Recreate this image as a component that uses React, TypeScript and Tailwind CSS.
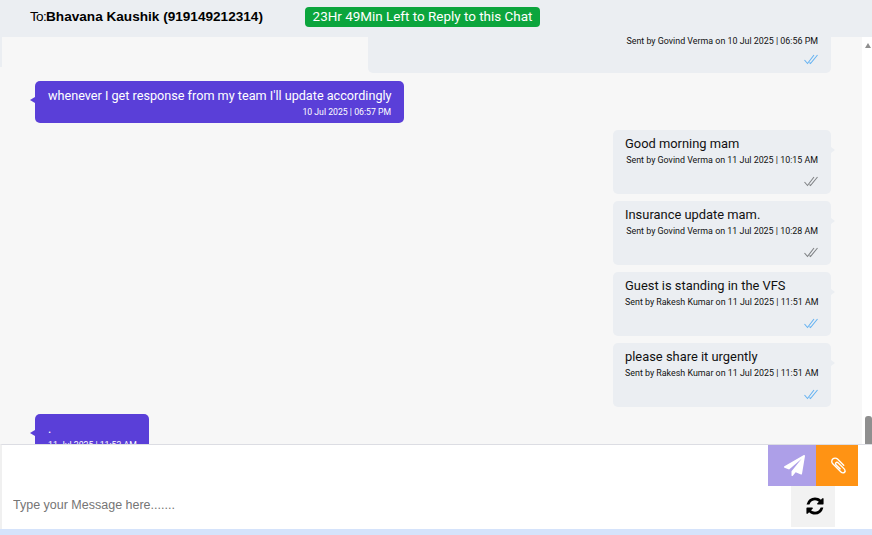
const FA_PLANE =
  "M1764 11q33 24 27 64l-256 1536q-5 29-32 45-14 8-31 8-11 0-24-5l-453-185-242 295q-18 23-49 23-13 0-22-4-19-7-30.5-23.5t-11.5-36.5v-349l864-1059-1069 925-395-162q-37-14-40-55-2-40 32-59l1664-960q15-9 32-9 20 0 36 11z";
const FA_CLIP =
  "M1596 1385q0 117-79 196t-196 79q-135 0-235-100l-777-776q-113-115-113-271 0-159 110-270t269-111q158 0 273 113l605 606q10 10 10 22 0 16-30.5 46.5t-46.5 30.5q-13 0-23-10l-606-607q-79-77-181-77-106 0-179 75t-73 181q0 105 76 181l776 777q63 63 134 63 60 0 100-40t40-100q0-71-63-134l-581-581q-26-24-60-24-29 0-48 19t-19 48q0 32 25 59l410 410q10 10 10 22 0 16-31 47t-47 31q-12 0-22-10l-410-410q-63-61-63-149 0-82 57-139t139-57q88 0 149 63l581 581q100 98 100 235z";
const FA_REFRESH =
  "M1639 1056q0 5-1 7-64 268-268 434.5t-478 166.5q-146 0-282.5-55t-243.5-157l-129 129q-19 19-45 19t-45-19-19-45v-448q0-26 19-45t45-19h448q26 0 45 19t19 45-19 45l-137 137q71 66 161 102t187 36q134 0 250-65t186-179q11-17 53-117 8-23 30-23h192q13 0 22.5 9.5t9.5 22.5zm25-800v448q0 26-19 45t-45 19h-448q-26 0-45-19t-19-45 19-45l138-138q-148-137-349-137-134 0-250 65t-186 179q-11 17-53 117-8 23-30 23h-199q-13 0-22.5-9.5t-9.5-22.5v-7q65-268 270-434.5t480-166.5q146 0 284 55.5t245 156.5l130-129q19-19 45-19t45 19 19 45z";

function Fa({ d, size, fill }: { d: string; size: number; fill: string }) {
  return (
    <svg width={size} height={size} viewBox="0 0 1792 1792" fill={fill}>
      <path d={d} />
    </svg>
  );
}

function Ticks({ blue }: { blue: boolean }) {
  const c = blue ? "#66b3f2" : "#808386";
  return (
    <svg width="14" height="11" viewBox="0 0 14 11" fill="none" stroke={c} strokeWidth="1.1">
      <path d="M0.5 6 L3.5 9.5 L10 1" />
      <path d="M5.5 8.5 L6.5 9.5 L13.5 1" />
    </svg>
  );
}

function Sent({ text, by, when, blue }: { text: string; by: string; when: string; blue: boolean }) {
  return (
    <div className="relative ml-auto w-[218px] h-[64px] rounded-[5px] bg-[#ebeef2] pl-[12px] pr-[13px] pt-[5px]">
      <div className="text-[12.9px] leading-[18px] text-[#111]">{text}</div>
      <div className="text-[8.9px] leading-[14px] text-[#111] whitespace-nowrap text-right">
        Sent by {by} on {when}
      </div>
      <div className="flex justify-end mt-[9px]">
        <Ticks blue={blue} />
      </div>
      <span className="absolute right-[-4px] top-[17px] border-y-[3px] border-l-[4px] border-y-transparent border-l-[#ebeef2]" />
    </div>
  );
}

function Received({ text, when, cls }: { text: string; when: string; cls: string }) {
  return (
    <div className={`relative rounded-[5px] bg-[#5a3fd8] pl-[13px] pr-[13px] pt-[6px] text-white ${cls}`}>
      <div className="text-[12.65px] leading-[18px] whitespace-nowrap">{text}</div>
      <div className="text-[8.7px] leading-[14px] text-right whitespace-nowrap">{when}</div>
      <span className="absolute left-[-5px] top-[16px] border-y-[3px] border-r-[5px] border-y-transparent border-r-[#5a3fd8]" />
    </div>
  );
}

export default function App() {
  return (
    <div className="h-[535px] w-[872px] flex flex-col overflow-hidden bg-white font-['Roboto',sans-serif]">
      <header className="h-[37px] shrink-0 bg-[#ebeef2] flex items-start pl-[30px] pt-[7px]">
        <div className="w-[275px] text-[13.6px] leading-[20px] text-black font-['Liberation_Sans',sans-serif]">
          <span className="tracking-[-0.7px]">To:</span>
          <b>Bhavana Kaushik (919149212314)</b>
        </div>
        <div className="h-[20px] w-[235px] rounded-[4px] bg-[#0ca53d] text-white text-[13.45px] leading-[20px] text-center whitespace-nowrap">
          23Hr 49Min Left to Reply to this Chat
        </div>
      </header>

      <main className="relative h-[407px] shrink-0 overflow-hidden bg-white">
        <div className="h-[407px] w-[862px] overflow-hidden bg-[#f7f7f7] flex flex-col pl-[2px]">
          <div className="h-[36px] shrink-0 flex justify-end pr-[31px]">
            <div className="w-[463px] h-[36px] rounded-b-[5px] bg-[#ebeef2] pr-[13px] pt-[1px] flex flex-col items-end">
              <div className="text-[8.9px] leading-[6px] text-[#111] whitespace-nowrap">
                Sent by Govind Verma on 10 Jul 2025 | 06:56 PM
              </div>
              <div className="mt-[10px]">
                <Ticks blue />
              </div>
            </div>
          </div>
          <Received
            text="whenever I get response from my team I'll update accordingly"
            when="10 Jul 2025 | 06:57 PM"
            cls="ml-[33px] mt-[8px] w-[369px] h-[42px] shrink-0"
          />
          <div className="pr-[31px] mt-[7px] flex flex-col gap-[7px] shrink-0">
            <Sent text="Good morning mam" by="Govind Verma" when="11 Jul 2025 | 10:15 AM" blue={false} />
            <Sent text="Insurance update mam." by="Govind Verma" when="11 Jul 2025 | 10:28 AM" blue={false} />
            <Sent text="Guest is standing in the VFS" by="Rakesh Kumar" when="11 Jul 2025 | 11:51 AM" blue />
            <Sent text="please share it urgently" by="Rakesh Kumar" when="11 Jul 2025 | 11:51 AM" blue />
          </div>
          <Received text="." when="11 Jul 2025 | 11:53 AM" cls="ml-[33px] mt-[7px] w-[114px] h-[42px] shrink-0" />
        </div>
        <span className="absolute left-0 top-0 w-[2px] h-[30px] bg-[#ebeef2]" />
        <div className="absolute right-0 top-0 bottom-0 w-[10px] bg-white">
          <span className="absolute left-[3px] top-[6px] border-x-[3.5px] border-b-[5px] border-x-transparent border-b-[#8f8f8f]" />
          <span className="absolute right-0 bottom-0 w-[7px] h-[28px] rounded-t-[3px] bg-[#8f8f8f]" />
        </div>
      </main>

      <footer className="h-[85px] shrink-0 border-t border-l-[2px] border-[#dcdde3] border-l-[#f0f0f0] bg-white flex flex-col">
        <div className="flex justify-end h-[41px] pr-[14px]">
          <button className="w-[48px] bg-[#ad9fe8] flex items-center justify-center pl-[5px]">
            <Fa d={FA_PLANE} size={21} fill="#ffffff" />
          </button>
          <button className="w-[42px] bg-[#ff9314] flex items-center justify-center pl-[3px]">
            <Fa d={FA_CLIP} size={19} fill="#ffffff" />
          </button>
        </div>
        <div className="flex h-[41px]">
          <input
            placeholder="Type your Message here......."
            className="flex-1 min-w-0 pl-[11px] pb-[3px] text-[12.5px] outline-none font-['Liberation_Sans',sans-serif] placeholder:text-[#757575]"
          />
          <button className="w-[44px] mr-[37px] bg-[#f2f2f2] flex items-center justify-center pl-[4px] pb-[2px]">
            <Fa d={FA_REFRESH} size={20} fill="#000000" />
          </button>
        </div>
      </footer>
      <div className="flex-1 bg-[#d5e3fb]" />
    </div>
  );
}
